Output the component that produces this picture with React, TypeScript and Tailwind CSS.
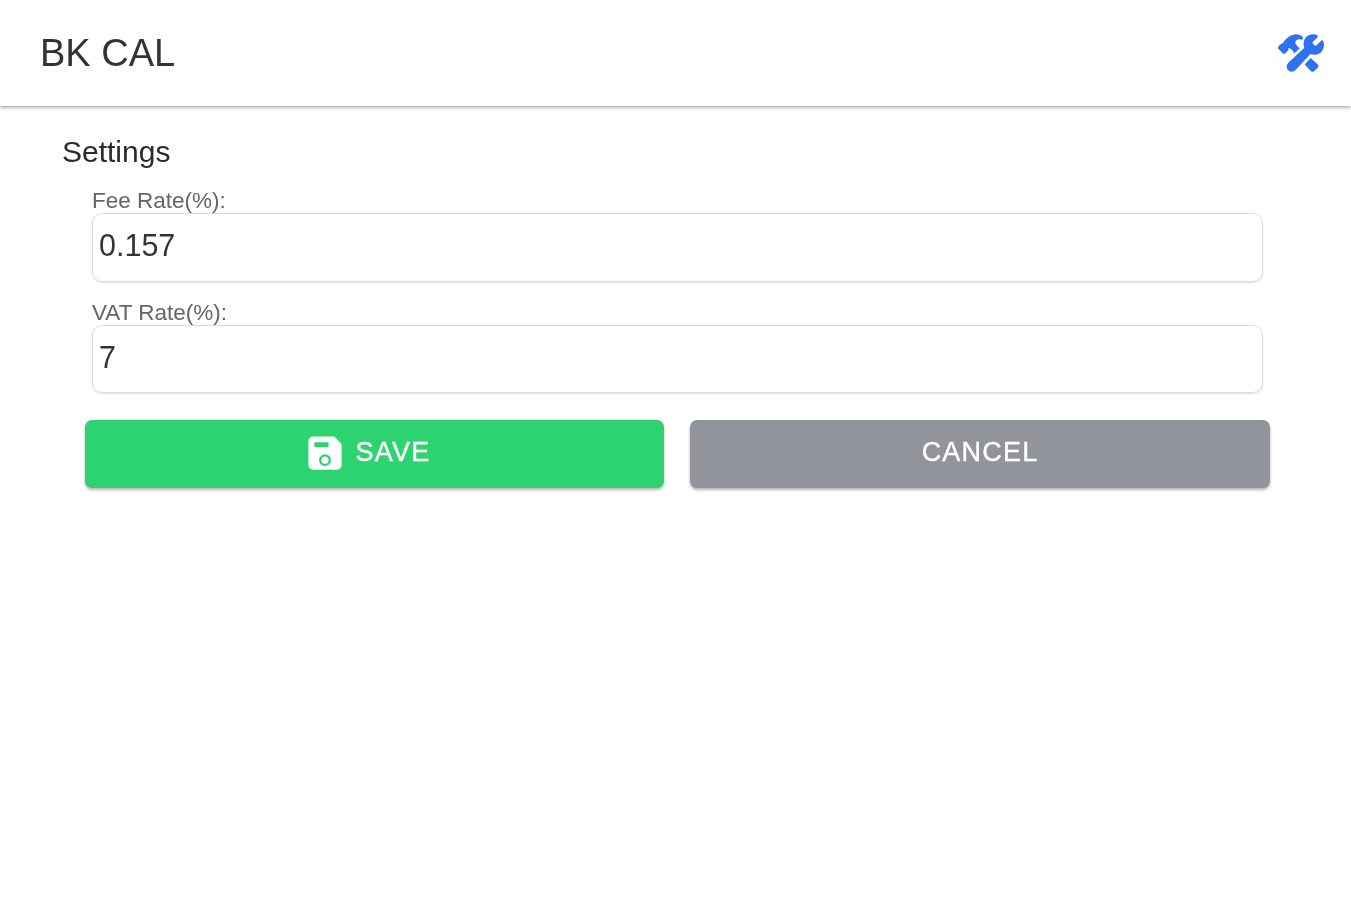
import React from "react";
import { IoConstruct, IoSave } from "react-icons/io5";

export default function App() {
  return (
    <div className="min-h-[900px] bg-white font-['Liberation_Sans',Arial,sans-serif] text-[#212529] blur-[0.5px]">
      <header className="h-[106px] flex items-center justify-between pl-10 pr-[27px] bg-white shadow-[0_1px_4px_rgba(0,0,0,0.45)]">
        <h1 className="text-[38px] leading-none text-[#333333] font-normal">BK CAL</h1>
        <IoConstruct className="w-[46px] h-[46px] text-[#2f72f0]" />
      </header>
      <main className="pl-[62px] pr-[81px] pt-[29px]">
        <h2 className="text-[30px] leading-[34px] font-normal text-[#2b2b2b]">Settings</h2>
        <div className="pl-[30px] pr-[7px] mt-[20px]">
          <label className="block text-[22.5px] leading-[24px] text-[#666666]">Fee Rate(%):</label>
          <div className="h-[69px] border border-[#dcdcdc] rounded-[10px] shadow-[0_1px_2px_rgba(0,0,0,0.12)] pl-[6px] pb-[3px] flex items-center text-[30.5px] text-[#333333]">0.157</div>
          <label className="block text-[22.5px] leading-[24px] text-[#666666] mt-[19px]">VAT Rate(%):</label>
          <div className="h-[68px] border border-[#dcdcdc] rounded-[10px] shadow-[0_1px_2px_rgba(0,0,0,0.12)] pl-[6px] pb-[2px] flex items-center text-[30.5px] text-[#333333]">7</div>
        </div>
        <div className="flex gap-[26px] mt-[27px] ml-[23px]">
          <button className="w-[579px] h-[68px] rounded-[7px] bg-[#2dd36f] text-white text-[27px] font-normal tracking-[1.2px] [-webkit-text-stroke:0.4px_white] flex items-center justify-center gap-[12px] pb-[3px] pr-[13px] shadow-[0_2px_3px_rgba(0,0,0,0.3)]">
            <IoSave className="w-[38px] h-[38px]" />
            SAVE
          </button>
          <button className="w-[580px] h-[68px] rounded-[7px] bg-[#92949c] text-white text-[27px] font-normal tracking-[1.2px] [-webkit-text-stroke:0.4px_white] flex items-center justify-center pb-[3px] shadow-[0_2px_3px_rgba(0,0,0,0.3)]">
            CANCEL
          </button>
        </div>
      </main>
    </div>
  );
}
